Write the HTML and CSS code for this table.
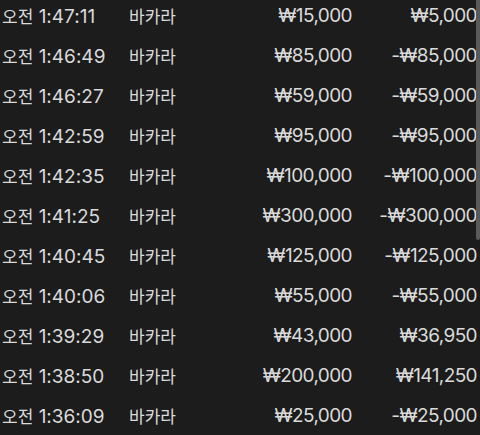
FILE: index.html
```html
<!DOCTYPE html>
<html lang="ko">
<head>
<meta charset="utf-8">
<link rel="stylesheet" href="styles.css">
</head>
<body>
<div class="list">
  <div class="row"><span><span class="ko">오전</span> 1:47:11</span><span class="ko">바카라</span><span class="num">₩15,000</span><span class="num">₩5,000</span></div>
  <div class="row"><span><span class="ko">오전</span> 1:46:49</span><span class="ko">바카라</span><span class="num">₩85,000</span><span class="num">-₩85,000</span></div>
  <div class="row"><span><span class="ko">오전</span> 1:46:27</span><span class="ko">바카라</span><span class="num">₩59,000</span><span class="num">-₩59,000</span></div>
  <div class="row"><span><span class="ko">오전</span> 1:42:59</span><span class="ko">바카라</span><span class="num">₩95,000</span><span class="num">-₩95,000</span></div>
  <div class="row"><span><span class="ko">오전</span> 1:42:35</span><span class="ko">바카라</span><span class="num">₩100,000</span><span class="num">-₩100,000</span></div>
  <div class="row"><span><span class="ko">오전</span> 1:41:25</span><span class="ko">바카라</span><span class="num">₩300,000</span><span class="num">-₩300,000</span></div>
  <div class="row"><span><span class="ko">오전</span> 1:40:45</span><span class="ko">바카라</span><span class="num">₩125,000</span><span class="num">-₩125,000</span></div>
  <div class="row"><span><span class="ko">오전</span> 1:40:06</span><span class="ko">바카라</span><span class="num">₩55,000</span><span class="num">-₩55,000</span></div>
  <div class="row"><span><span class="ko">오전</span> 1:39:29</span><span class="ko">바카라</span><span class="num">₩43,000</span><span class="num">₩36,950</span></div>
  <div class="row"><span><span class="ko">오전</span> 1:38:50</span><span class="ko">바카라</span><span class="num">₩200,000</span><span class="num">₩141,250</span></div>
  <div class="row"><span><span class="ko">오전</span> 1:36:09</span><span class="ko">바카라</span><span class="num">₩25,000</span><span class="num">-₩25,000</span></div>
</div>
<div class="scrollbar"></div>
</body>
</html>
```

FILE: styles.css
```css
html, body {
  margin: 0;
  padding: 0;
  background: #1c1c1c;
  overflow: hidden;
  height: 435px;
}
.list {
  margin-top: -5px;
  padding-left: 2px;
  font-family: Inter, "Noto Sans CJK KR", sans-serif;
  font-size: 19px;
  color: #dadada;
}
.ko {
  font-family: "Noto Sans CJK KR", sans-serif;
  font-size: 17px;
}
.row {
  display: grid;
  grid-template-columns: 127px 100px 123px 125px;
  height: 40px;
  align-items: center;
  white-space: nowrap;
}
.num {
  text-align: right;
  letter-spacing: -0.6px;
}
.scrollbar {
  position: fixed;
  top: 0;
  right: 0;
  width: 4px;
  height: 240px;
  background: #5a5a5a;
  border-radius: 0 0 2px 2px;
}
```
